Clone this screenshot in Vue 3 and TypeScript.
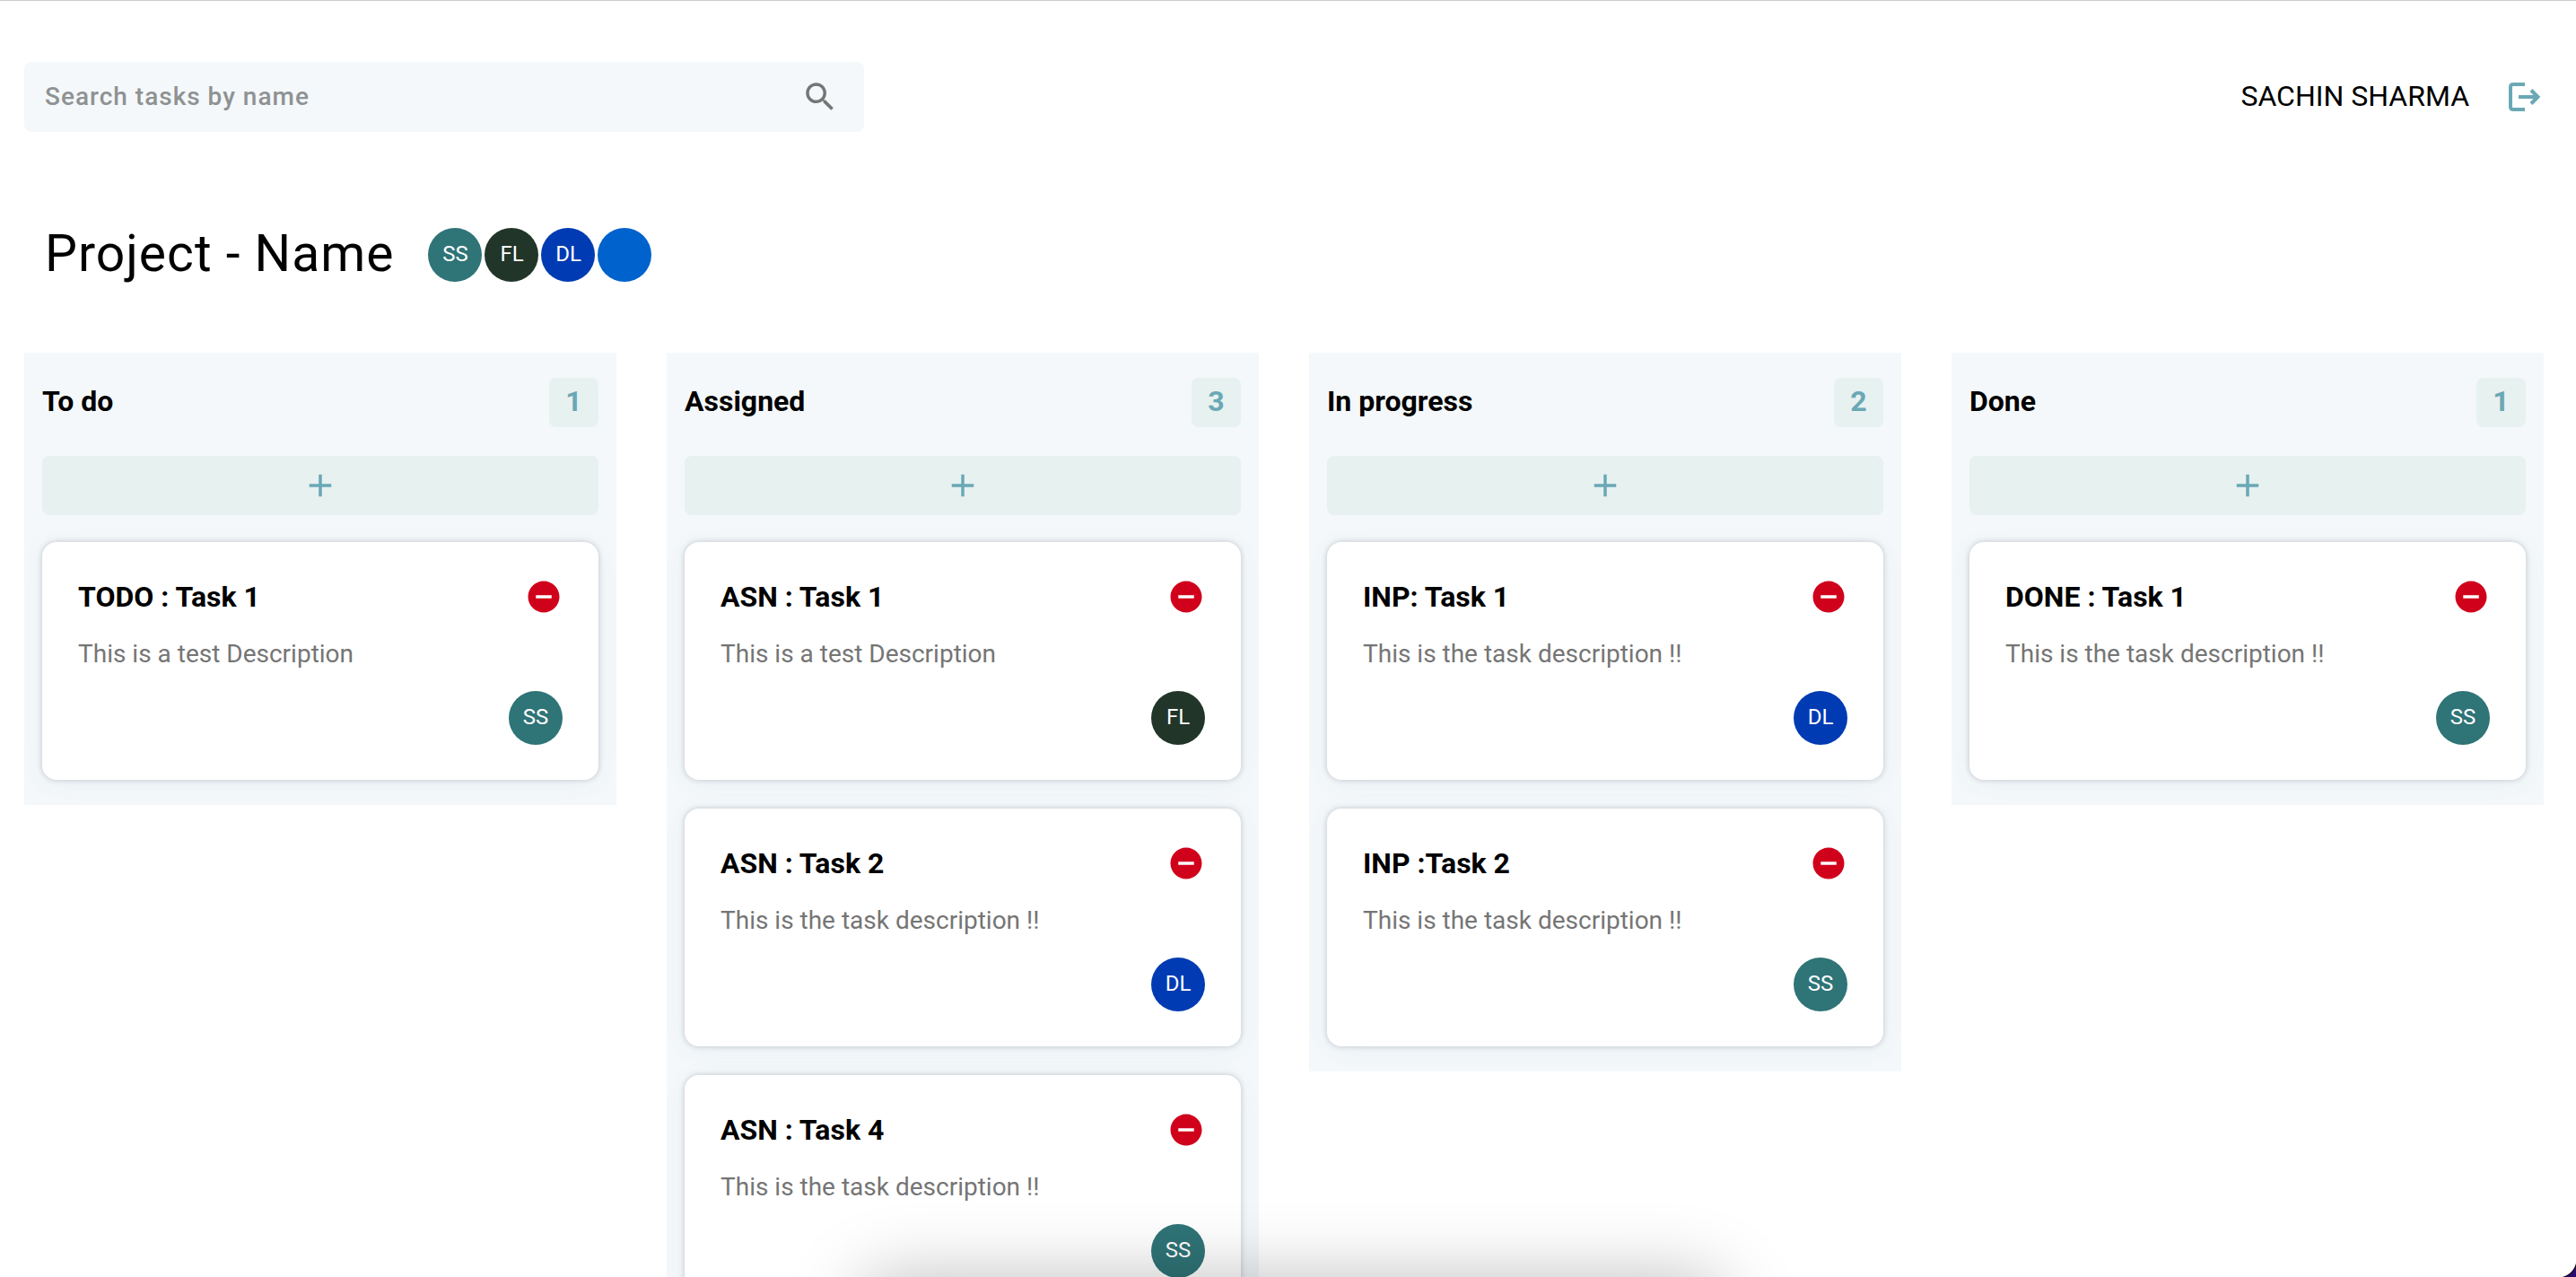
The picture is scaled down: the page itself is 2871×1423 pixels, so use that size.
<script setup lang="ts">
import { computed, ref } from 'vue'

interface Member {
  initials: string
  color: string
}

interface Task {
  title: string
  description: string
  owner: string
}

interface Column {
  name: string
  tasks: Task[]
}

const members: Member[] = [
  { initials: 'SS', color: '#2f7477' },
  { initials: 'FL', color: '#223529' },
  { initials: 'DL', color: '#003bb3' },
  { initials: '', color: '#0062cc' },
]

const columns = ref<Column[]>([
  {
    name: 'To do',
    tasks: [{ title: 'TODO : Task 1', description: 'This is a test Description', owner: 'SS' }],
  },
  {
    name: 'Assigned',
    tasks: [
      { title: 'ASN : Task 1', description: 'This is a test Description', owner: 'FL' },
      { title: 'ASN : Task 2', description: 'This is the task description !!', owner: 'DL' },
      { title: 'ASN : Task 4', description: 'This is the task description !!', owner: 'SS' },
    ],
  },
  {
    name: 'In progress',
    tasks: [
      { title: 'INP: Task 1', description: 'This is the task description !!', owner: 'DL' },
      { title: 'INP :Task 2', description: 'This is the task description !!', owner: 'SS' },
    ],
  },
  {
    name: 'Done',
    tasks: [{ title: 'DONE : Task 1', description: 'This is the task description !!', owner: 'SS' }],
  },
])

const query = ref('')

const visibleColumns = computed(() =>
  columns.value.map((column) => ({
    name: column.name,
    tasks: column.tasks.filter((task) => task.title.toLowerCase().includes(query.value.toLowerCase())),
  })),
)

function colorOf(initials: string): string {
  return members.find((member) => member.initials === initials)?.color ?? '#0062cc'
}

function addTask(index: number): void {
  columns.value[index].tasks.push({ title: 'New task', description: '', owner: 'SS' })
}

function removeTask(index: number, task: Task): void {
  const column = columns.value[index]
  column.tasks = column.tasks.filter((item) => item !== task)
}
</script>

<template>
  <div class="page">
    <header class="topbar">
      <form class="search" role="search" @submit.prevent>
        <input v-model="query" type="text" aria-label="Search tasks by name" placeholder="Search tasks by name" />
        <button type="submit" class="icon-button search-button" aria-label="Search">
          <svg class="icon" viewBox="0 0 24 24" aria-hidden="true">
            <path
              d="M15.5 14h-.79l-.28-.27C15.41 12.59 16 11.11 16 9.5 16 5.91 13.09 3 9.5 3S3 5.91 3 9.5 5.91 16 9.5 16c1.61 0 3.09-.59 4.23-1.57l.27.28v.79l5 4.99L20.49 19l-4.99-5zm-6 0C7.01 14 5 11.99 5 9.5S7.01 5 9.5 5 14 7.01 14 9.5 11.99 14 9.5 14z"
            />
          </svg>
        </button>
      </form>
      <div class="account">
        <span class="user">SACHIN SHARMA</span>
        <button type="button" class="icon-button logout" aria-label="Log out">
          <svg class="logout-icon" viewBox="0 0 36 32" aria-hidden="true">
            <path d="M18 2H5Q2 2 2 5V27Q2 30 5 30H18M11 16H33M25 8.500L32.500 16L25 23.500" />
          </svg>
        </button>
      </div>
    </header>

    <main>
      <div class="project">
        <h1>Project - Name</h1>
        <div class="members">
          <span v-for="member in members" :key="member.color" class="avatar" :style="{ background: member.color }">{{
            member.initials
          }}</span>
        </div>
      </div>

      <div class="board">
        <section v-for="(column, index) in visibleColumns" :key="column.name" class="column">
          <div class="column-head">
            <h2>{{ column.name }}</h2>
            <span class="count">{{ column.tasks.length }}</span>
          </div>
          <button type="button" class="add" :aria-label="`Add task to ${column.name}`" @click="addTask(index)">
            <svg class="icon" viewBox="0 0 24 24" aria-hidden="true">
              <path d="M19 13h-6v6h-2v-6H5v-2h6V5h2v6h6v2z" />
            </svg>
          </button>
          <div class="cards">
            <article v-for="task in column.tasks" :key="task.title" class="card">
              <div class="card-head">
                <h3>{{ task.title }}</h3>
                <button
                  type="button"
                  class="icon-button remove"
                  :aria-label="`Remove ${task.title}`"
                  @click="removeTask(index, task)"
                >
                  <svg class="icon" viewBox="0 0 24 24" aria-hidden="true">
                    <path
                      d="M12 2C6.48 2 2 6.48 2 12s4.480 10 10 10 10-4.480 10-10S17.520 2 12 2zm5 11H7v-2h10v2z"
                    />
                  </svg>
                </button>
              </div>
              <p>{{ task.description }}</p>
              <span class="avatar" :style="{ background: colorOf(task.owner) }">{{ task.owner }}</span>
            </article>
          </div>
        </section>
      </div>
    </main>

    <div class="dock-shadow" aria-hidden="true"></div>
    <div class="window-corner" aria-hidden="true"></div>
  </div>
</template>

<style>
body {
  background: #fff;
}
</style>

<style scoped>
* {
  box-sizing: border-box;
}

.page {
  position: relative;
  height: 100vh;
  overflow: hidden;
  padding: 68px 36px 0 27px;
  border-top: 1px solid #cbcbcb;
  font-family: Roboto, "Liberation Sans", sans-serif;
  color: #000;
}

h1,
h2,
h3,
p {
  margin: 0;
}

button {
  border: 0;
  padding: 0;
  cursor: pointer;
}

.icon-button {
  display: flex;
  background: none;
}

.icon {
  display: block;
  width: 42px;
  height: 42px;
  fill: currentColor;
}

.topbar {
  display: flex;
  align-items: center;
  justify-content: space-between;
}

.search {
  display: flex;
  align-items: center;
  width: 33.33%;
  height: 78px;
  padding: 0 28px 0 23px;
  border-radius: 8px;
  background: #f4f8fa;
}

.search input {
  flex: 1;
  min-width: 0;
  padding: 0;
  border: 0;
  outline: 0;
  background: none;
  font: 500 28px/40px Roboto, "Liberation Sans", sans-serif;
  letter-spacing: 1px;
  color: #000;
}

.search input::placeholder {
  color: #8f9293;
  opacity: 1;
}

.search-button {
  color: #757575;
}

.account {
  display: flex;
  align-items: center;
  gap: 44px;
  padding-right: 3px;
}

.user {
  padding-bottom: 2px;
  font-size: 32px;
  line-height: 42px;
}

.logout-icon {
  display: block;
  width: 36px;
  height: 32px;
  fill: none;
  stroke: #6aa8b5;
  stroke-width: 4;
}

.project {
  display: flex;
  align-items: center;
  gap: 38px;
  margin: 102px 0 74px;
  padding-left: 23px;
}

h1 {
  padding-bottom: 2px;
  font-size: 57px;
  font-weight: 400;
  line-height: 68px;
  letter-spacing: 1px;
}

.members {
  display: flex;
  gap: 3px;
}

.avatar {
  display: flex;
  align-items: center;
  justify-content: center;
  width: 60px;
  height: 60px;
  padding-bottom: 2px;
  border-radius: 50%;
  font-size: 24px;
  line-height: 32px;
  color: #fff;
}

.board {
  display: grid;
  grid-template-columns: repeat(4, minmax(0, 1fr));
  align-items: start;
  gap: 56px;
}

.column {
  padding: 28px 20px;
  background: #f4f8fa;
}

.column-head {
  display: flex;
  align-items: center;
  justify-content: space-between;
  margin-bottom: 32px;
}

h2,
h3 {
  font-size: 32px;
  font-weight: 700;
  line-height: 42px;
}

h2,
.count {
  padding-bottom: 4px;
}

.count {
  display: flex;
  align-items: center;
  justify-content: center;
  width: 55px;
  height: 55px;
  border-radius: 8px;
  background: #e7f1f0;
  font-size: 32px;
  font-weight: 700;
  line-height: 42px;
  color: #6aa8b5;
}

.add {
  display: flex;
  align-items: center;
  justify-content: center;
  width: 100%;
  height: 66px;
  margin-bottom: 30px;
  border-radius: 8px;
  background: #e7f1f0;
  color: #6aa8b5;
}

.cards {
  display: flex;
  flex-direction: column;
  gap: 32px;
}

.card {
  display: flex;
  flex-direction: column;
  padding: 40px 40px 39px;
  border-radius: 16px;
  background: #fff;
  box-shadow:
    0 0 6px rgba(20, 25, 40, 0.22),
    0 4px 28px rgba(60, 90, 150, 0.05);
}

.card-head {
  display: flex;
  align-items: center;
  justify-content: space-between;
}

.remove {
  color: #d0021b;
}

.card p {
  margin: 23px 0 21px;
  font-size: 28px;
  line-height: 40px;
  color: #757575;
}

.card .avatar {
  align-self: flex-end;
}

.dock-shadow {
  position: absolute;
  right: 33%;
  bottom: -100px;
  left: 33.3%;
  height: 100px;
  border-radius: 40px;
  box-shadow: 0 0 80px rgba(0, 0, 0, 0.25);
  pointer-events: none;
}

.window-corner {
  position: absolute;
  right: 0;
  bottom: 0;
  width: 20px;
  height: 20px;
  background: radial-gradient(circle at 0 0, transparent 20px, #000 21px, #2a0a6e 22px);
  pointer-events: none;
}
</style>
